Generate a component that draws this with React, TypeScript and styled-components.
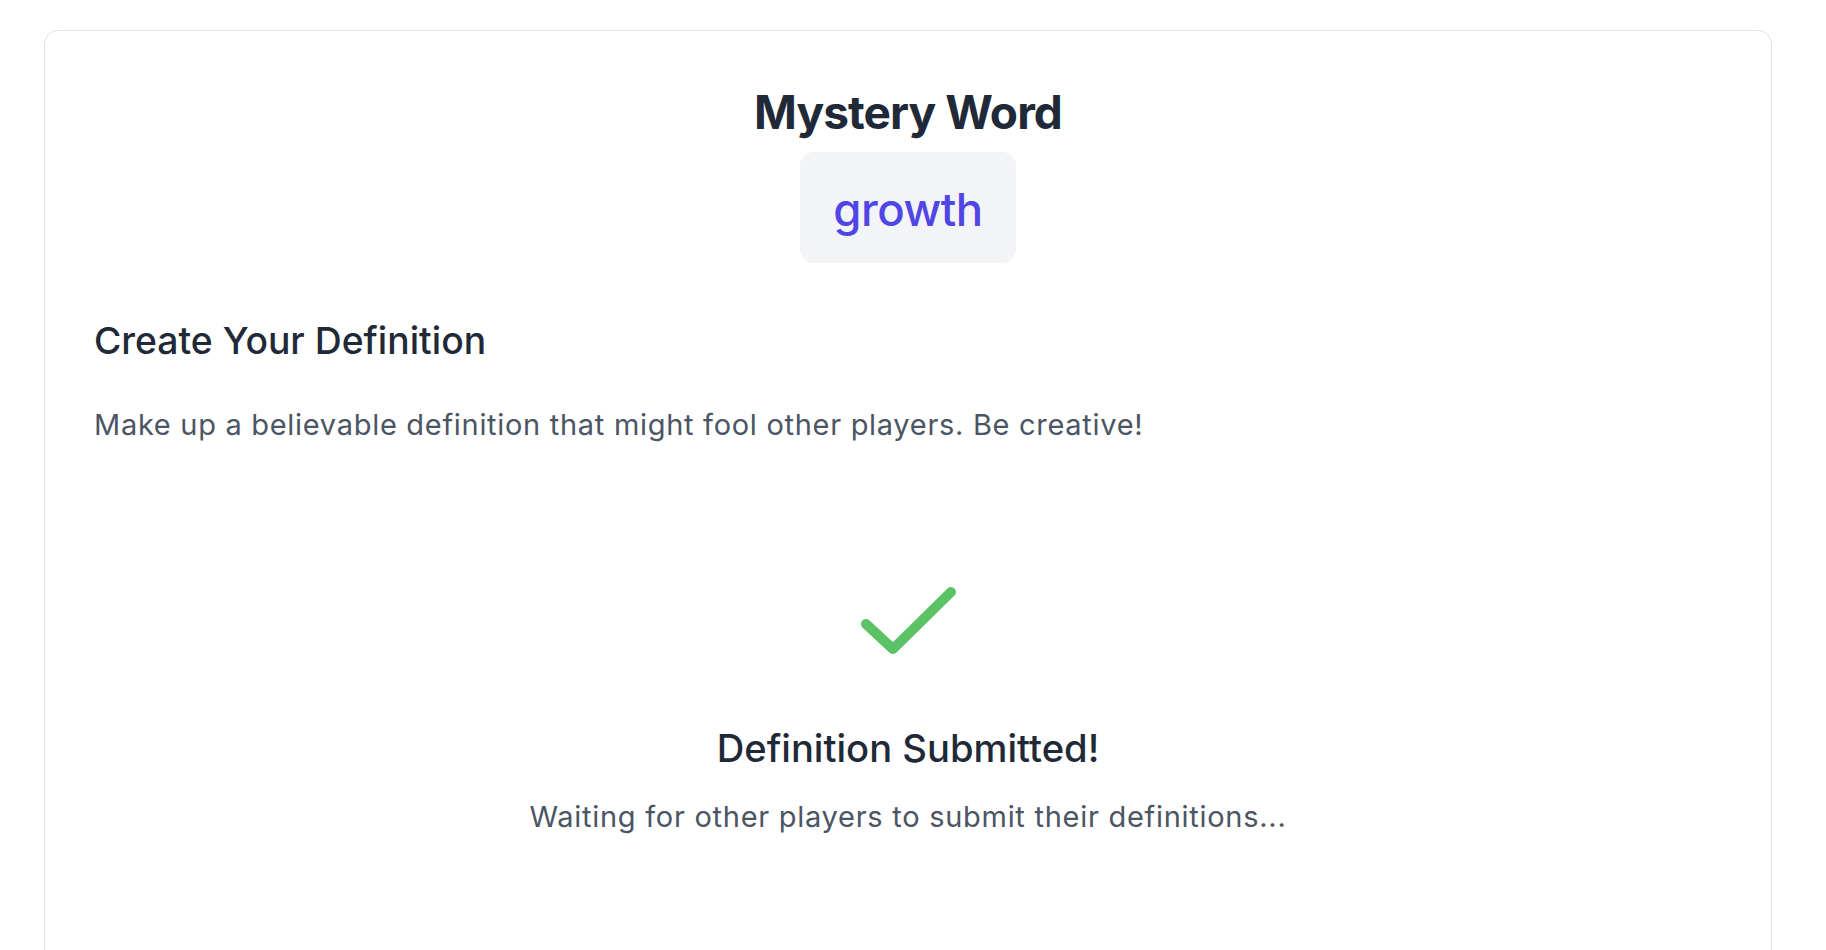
import React from "react";
import styled, { createGlobalStyle } from "styled-components";

const GlobalStyle = createGlobalStyle`
  html, body {
    margin: 0;
    padding: 0;
    background: #ffffff;
  }
  body {
    font-family: Inter, "Noto Sans", "Liberation Sans", sans-serif;
    -webkit-font-smoothing: antialiased;
  }
  * { box-sizing: border-box; }
`;

const Page = styled.div`
  padding: 30px 0 0 44px;
  height: 950px;
  overflow: hidden;
`;

const Card = styled.section`
  width: 1728px;
  min-height: 1000px;
  border: 1px solid #e2e2e2;
  border-radius: 14px;
  padding: 53px 49px 60px;
  display: flex;
  flex-direction: column;
`;

const Header = styled.header`
  display: flex;
  flex-direction: column;
  align-items: center;
  gap: 12px;
`;

const Title = styled.h1`
  margin: 0;
  font-size: 46px;
  line-height: 56px;
  font-weight: 700;
  letter-spacing: -0.02em;
  color: #1f2937;
`;

const WordBadge = styled.div`
  display: inline-flex;
  padding: 32px 33px 27px;
  background: #f3f4f6;
  border-radius: 14px;
  font-size: 45.5px;
  line-height: 52px;
  font-weight: 500;
  letter-spacing: -0.01em;
  color: #4f46e5;
`;

const SectionTitle = styled.h2`
  margin: 56px 0 0;
  font-size: 37.3px;
  line-height: 44px;
  font-weight: 500;
  letter-spacing: 0;
  color: #1f2937;
`;

const Hint = styled.p`
  margin: 42px 0 0;
  font-size: 29px;
  line-height: 40px;
  font-weight: 400;
  letter-spacing: 0.7px;
  color: #4b5563;
`;

const Status = styled.div`
  margin-top: 133px;
  display: flex;
  flex-direction: column;
  align-items: center;
`;

const CheckIcon = styled.svg`
  width: 120px;
  height: 90px;
  display: block;
`;

const StatusTitle = styled.h3`
  margin: 58px 0 0;
  font-size: 38.2px;
  line-height: 44px;
  font-weight: 500;
  letter-spacing: 0;
  color: #1f2937;
`;

const StatusText = styled.p`
  margin: 27px 0 0;
  font-size: 29px;
  line-height: 40px;
  font-weight: 400;
  letter-spacing: 0.72px;
  color: #4b5563;
`;

export default function App() {
  return (
    <>
      <GlobalStyle />
      <Page>
        <Card>
          <Header>
            <Title>Mystery Word</Title>
            <WordBadge>growth</WordBadge>
          </Header>
          <SectionTitle>Create Your Definition</SectionTitle>
          <Hint>
            Make up a believable definition that might fool other players. Be creative!
          </Hint>
          <Status>
            <CheckIcon viewBox="0 0 120 90" fill="none" aria-hidden="true">
              <polyline
                points="18,46 45,71 103,14"
                stroke="#5bc365"
                strokeWidth="10"
                strokeLinecap="round"
                strokeLinejoin="round"
              />
            </CheckIcon>
            <StatusTitle>Definition Submitted!</StatusTitle>
            <StatusText>Waiting for other players to submit their definitions...</StatusText>
          </Status>
        </Card>
      </Page>
    </>
  );
}
